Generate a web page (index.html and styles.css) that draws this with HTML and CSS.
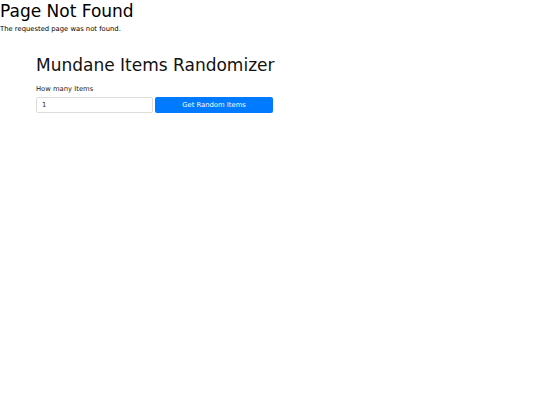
FILE: index.html
```html
<!DOCTYPE html>
<html>
<head>
<meta charset="utf-8">
<link rel="stylesheet" href="styles.css">
</head>
<body>
<h1 class="title">Page Not Found</h1>
<p class="msg">The requested page was not found.</p>
<div class="container">
  <h2 class="heading">Mundane Items Randomizer</h2>
  <label class="label">How many Items</label>
  <div class="row">
    <input class="input" type="text" value="1">
    <button class="btn">Get Random Items</button>
  </div>
</div>
</body>
</html>
```
FILE: styles.css
```css
html, body {
  margin: 0;
  padding: 0;
  background: #fff;
  font-family: "DejaVu Sans", sans-serif;
  color: #000;
}
.title {
  font-size: 17px;
  font-weight: normal;
  margin: 0;
  line-height: 22px;
}
.msg {
  font-size: 6.8px;
  margin: 2px 0 0 0;
  line-height: 10px;
}
.container {
  padding: 20px 0 0 36px;
  width: 237px;
}
.heading {
  font-size: 17px;
  font-weight: normal;
  margin: 0;
  line-height: 23px;
  color: #111;
  white-space: nowrap;
}
.label {
  display: block;
  font-size: 6.8px;
  margin-top: 7px;
  line-height: 10px;
  color: #222;
}
.row {
  display: flex;
  gap: 2px;
  margin-top: 3px;
}
.input {
  box-sizing: border-box;
  width: 117px;
  height: 16px;
  border: 1px solid #ddd;
  border-radius: 2px;
  padding: 0 5px;
  font-family: "DejaVu Sans", sans-serif;
  font-size: 6.8px;
  color: #333;
  margin: 0;
}
.btn {
  box-sizing: border-box;
  width: 118px;
  height: 16px;
  border: none;
  border-radius: 2px;
  background: #007bff;
  color: #fff;
  font-family: "DejaVu Sans", sans-serif;
  font-size: 6.8px;
  padding: 0;
  margin: 0;
}
```
